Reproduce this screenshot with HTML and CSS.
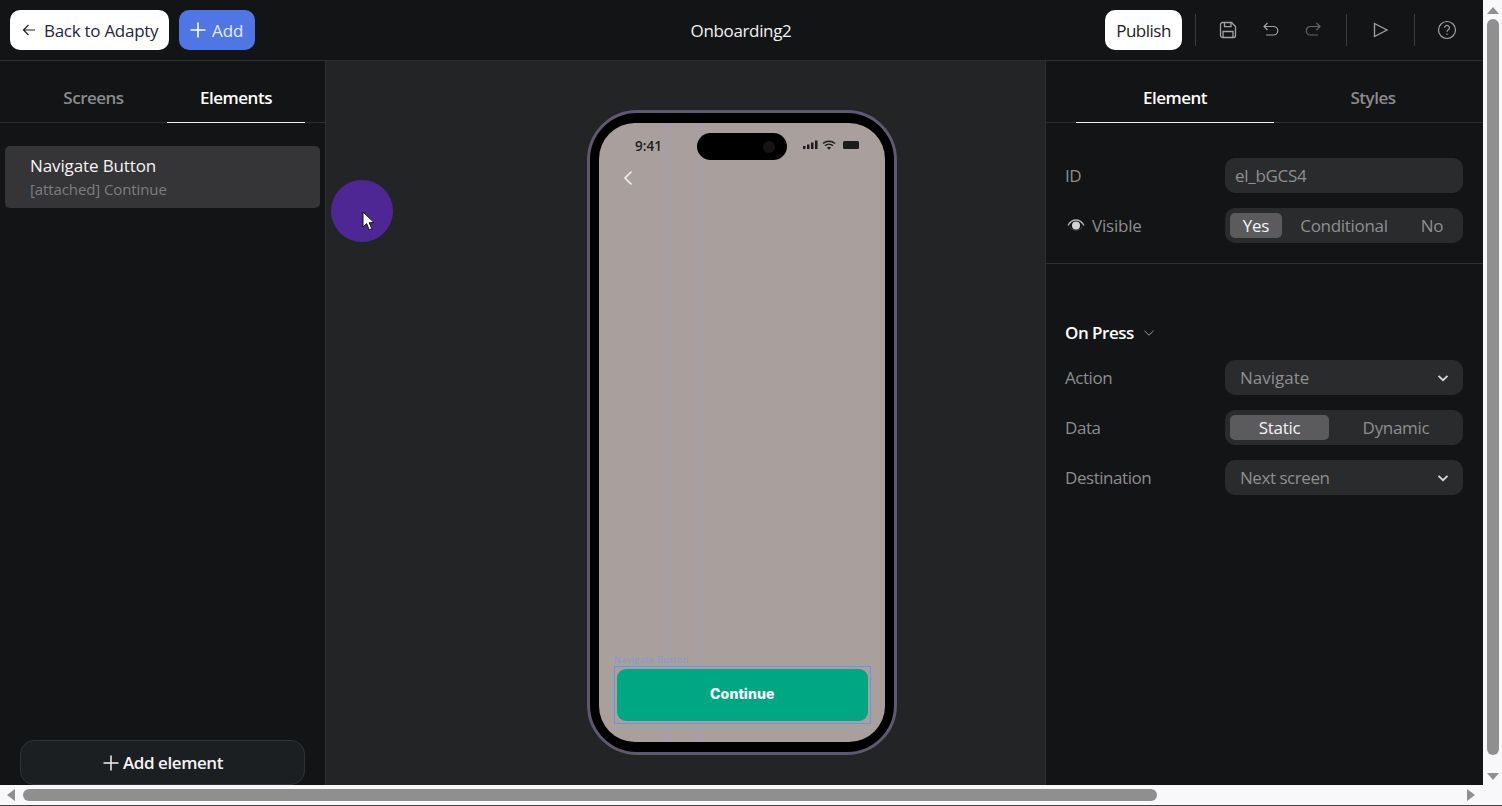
FILE: index.html
```html
<!DOCTYPE html>
<html lang="en">
<head>
<meta charset="utf-8">
<title>Onboarding2</title>
<link rel="stylesheet" href="styles.css">
</head>
<body>
<div class="window">
  <div class="app">
    <header class="topbar">
      <div class="top-left">
        <button class="btn btn-white btn-back">
          <svg class="ico" width="16" height="16" viewBox="0 0 16 16" fill="none" stroke="#222" stroke-width="1.2"><path d="M14 8H2.500M7.500 3 2.500 8l5 5"/></svg>
          <span>Back to Adapty</span>
        </button>
        <button class="btn btn-blue">
          <svg width="18" height="18" viewBox="0 0 18 18" fill="none" stroke="#fff" stroke-width="1.6"><path d="M9 1.500V16.500M1.500 9H16.500"/></svg>
          <span>Add</span>
        </button>
      </div>
      <div class="title">Onboarding2</div>
      <div class="top-right">
        <button class="btn btn-white btn-publish">Publish</button>
        <span class="vr vr-a"></span>
        <svg class="tool" width="20" height="20" viewBox="0 0 20 20" fill="none" stroke="#a3a3a3" stroke-width="1.3"><path d="M4.500 2.500h9l4 4v9a2 2 0 0 1-2 2h-11a2 2 0 0 1-2-2v-11a2 2 0 0 1 2-2Z"/><path d="M6.500 2.500v4.200h6.500V2.500M5 17.500v-6h10v6"/></svg>
        <svg class="tool tool-undo" width="20" height="20" viewBox="0 0 20 20" fill="none" stroke="#a3a3a3" stroke-width="1.2"><path d="M6.500 3 3 6.500 6.500 10M3 6.500h9.500a3.800 3.800 0 0 1 0 8.500H5"/></svg>
        <svg class="tool tool-redo" width="20" height="20" viewBox="0 0 20 20" fill="none" stroke="#666" stroke-width="1.2"><path d="M13.500 3 17 6.500 13.500 10M17 6.500H7.500a3.800 3.800 0 0 0 0 8.500H15"/></svg>
        <span class="vr vr-b"></span>
        <svg class="tool tool-play" width="20" height="20" viewBox="0 0 20 20" fill="none" stroke="#a3a3a3" stroke-width="1.3"><path d="M4.500 3.500 17 10 4.500 16.500Z"/></svg>
        <span class="vr vr-c"></span>
        <svg class="tool tool-help" width="20" height="20" viewBox="0 0 20 20" fill="none" stroke="#a3a3a3" stroke-width="1.2"><circle cx="10" cy="10" r="8.500"/><path d="M7.600 7.800a2.400 2.400 0 1 1 3.700 2c-.9.600-1.300 1-1.300 2"/><path d="M10 13.500v1.200"/></svg>
      </div>
    </header>
    <main class="body">
      <aside class="left">
        <nav class="tabs tabs-left">
          <div class="tab">Screens</div>
          <div class="tab active">Elements</div>
        </nav>
        <div class="list">
          <div class="list-item">
            <div class="item-name">Navigate Button</div>
            <div class="item-sub">[attached] Continue</div>
          </div>
        </div>
        <button class="add-element">
          <svg width="18" height="18" viewBox="0 0 18 18" fill="none" stroke="#f2f2f2" stroke-width="1.500"><path d="M9 1.500V16.500M1.500 9H16.500"/></svg>
          <span>Add element</span>
        </button>
      </aside>
      <section class="canvas">
        <div class="phone">
          <div class="screen">
            <div class="status">
              <span class="time">9:41</span>
              <span class="island"><i class="camera"></i></span>
              <svg class="status-icons" width="58" height="12" viewBox="0 0 58 12" fill="#1c1c1c">
                <rect x="1" y="7" width="2.500" height="3"/><rect x="5" y="5.500" width="2.500" height="4.500"/><rect x="9" y="3.500" width="2.500" height="6.500"/><rect x="13" y="1.500" width="2.500" height="8.500"/>
                <path d="M21 4.500a9 9 0 0 1 12 0M23 6.800a6 6 0 0 1 8 0" fill="none" stroke="#1c1c1c" stroke-width="1.500"/><path d="M25 8.500a3.200 3.200 0 0 1 4 0L27 10.800Z"/>
                <rect x="41" y="2" width="16" height="8" rx="1.500"/>
              </svg>
            </div>
            <svg class="back-chevron" width="12" height="18" viewBox="0 0 12 18" fill="none" stroke="#f4f2f2" stroke-width="1.500"><path d="M9.500 2.500 3 9l6.500 6.500"/></svg>
            <div class="screen-spacer"></div>
            <div class="selection-label">Navigate Button</div>
            <div class="selection">
              <button class="continue">Continue</button>
            </div>
          </div>
        </div>
        <div class="click-dot">
          <svg class="cursor" width="14" height="21" viewBox="0 0 14 21"><path d="M1 1v15l3.600-3.400 2.600 6.200 2.600-1.100-2.600-6 4.800-.2Z" fill="#fff" stroke="#111" stroke-width="1"/></svg>
        </div>
      </section>
      <aside class="right">
        <nav class="tabs tabs-right">
          <div class="tab active">Element</div>
          <div class="tab">Styles</div>
        </nav>
        <div class="group group-first">
          <div class="row">
            <label class="label">ID</label>
            <div class="field muted">el_bGCS4</div>
          </div>
          <div class="row">
            <label class="label label-icon">
              <svg width="18" height="14" viewBox="0 0 18 14"><path d="M1 7.500C3 3.800 5.800 2 9 2s6 1.800 8 5.500" fill="none" stroke="#b5b5b5" stroke-width="1.300"/><path d="M3 9.500c1.700 1.800 3.700 2.600 6 2.600s4.300-.8 6-2.600" fill="none" stroke="#4a4a4a" stroke-width="1"/><circle cx="9" cy="7.500" r="4" fill="#d4d4d4"/></svg>
              <span>Visible</span>
            </label>
            <div class="segmented seg-visible">
              <span class="seg seg-on seg-yes">Yes</span>
              <span class="seg seg-cond">Conditional</span>
              <span class="seg seg-no">No</span>
            </div>
          </div>
        </div>
        <div class="group group-press">
          <div class="section-head">
            <span>On Press</span>
            <svg width="12" height="12" viewBox="0 0 12 12" fill="none" stroke="#999" stroke-width="1"><path d="M1.500 3.800 6 8.200l4.500-4.400"/></svg>
          </div>
          <div class="row">
            <label class="label">Action</label>
            <div class="field select"><span class="wide">Navigate</span><svg width="12" height="12" viewBox="0 0 12 12" fill="none" stroke="#d8d8d8" stroke-width="1.800"><path d="M1.500 3.800 6 8.200l4.500-4.400"/></svg></div>
          </div>
          <div class="row">
            <label class="label">Data</label>
            <div class="segmented seg-data">
              <span class="seg seg-on">Static</span>
              <span class="seg">Dynamic</span>
            </div>
          </div>
          <div class="row">
            <label class="label">Destination</label>
            <div class="field select"><span>Next screen</span><svg width="12" height="12" viewBox="0 0 12 12" fill="none" stroke="#d8d8d8" stroke-width="1.800"><path d="M1.500 3.800 6 8.200l4.500-4.400"/></svg></div>
          </div>
        </div>
      </aside>
    </main>
  </div>
  <div class="vscroll">
    <i class="arrow arrow-up"></i>
    <i class="vthumb"></i>
    <i class="arrow arrow-down"></i>
  </div>
  <div class="hscroll">
    <i class="arrow arrow-left"></i>
    <i class="hthumb"></i>
    <i class="arrow arrow-right"></i>
  </div>
</div>
</body>
</html>
```
FILE: styles.css
```css
* { box-sizing: border-box; }
html, body { margin: 0; padding: 0; height: 100%; overflow: hidden; background: #f8f8fb; }
body { font-family: "Open Sans", "Noto Sans", "Liberation Sans", sans-serif; color: #fff; }
button { font: inherit; border: 0; padding: 0; }

.window {
  display: grid;
  grid-template-columns: 1483px 19px;
  grid-template-rows: 785px 20px;
  height: 806px;
  border-bottom: 1px solid #444;
}
.app { display: flex; flex-direction: column; background: #131416; overflow: hidden; }

.topbar {
  height: 61px;
  flex: none;
  display: flex;
  align-items: center;
  border-bottom: 1px solid #2e2f31;
  padding-left: 10px;
}
.top-left { display: flex; gap: 10px; }
.btn {
  height: 40px;
  border-radius: 10px;
  display: flex;
  align-items: center;
  font-size: 17px;
  letter-spacing: -0.5px;
}
.btn-white { background: #fff; color: #1d2740; }
.btn-back { width: 159px; padding-left: 11px; gap: 7px; letter-spacing: -0.28px; }
.btn-blue { background: #4f76e4; width: 76px; padding-left: 10px; gap: 5px; color: #e6ecfb; letter-spacing: -0.1px; }
.btn-publish { width: 77px; justify-content: center; color: #222; }
.title {
  flex: none;
  width: 300px;
  margin-left: 336px;
  text-align: center;
  font-size: 17px;
  letter-spacing: -0.35px;
  color: #f2f2f2;
}
.top-right { display: flex; align-items: center; margin-left: 214px; }
.vr { width: 1px; height: 32px; background: #3a3b3d; }
.vr-a { margin-left: 13px; margin-right: 22px; }
.tool { flex: none; }
.tool-undo { margin-left: 23px; }
.tool-redo { margin-left: 22px; }
.vr-b { margin-left: 23px; margin-right: 23px; }
.vr-c { margin-left: 24px; margin-right: 22px; }

.body { flex: 1; min-height: 0; display: flex; }
.left {
  width: 326px;
  flex: none;
  display: flex;
  flex-direction: column;
  border-right: 1px solid #2e2f31;
}
.tabs {
  height: 62px;
  flex: none;
  display: grid;
  border-bottom: 1px solid #2e2f31;
  font-size: 17px;
  font-weight: 600;
  letter-spacing: -0.5px;
}
.tabs-left { grid-template-columns: 147px 138px; padding: 0 20px; }
.tabs-right { grid-template-columns: 198px 198px; padding: 0 10px 0 30px; }
.tab {
  display: flex;
  align-items: center;
  justify-content: center;
  color: #8b8b8c;
  padding-top: 11px;
  margin-bottom: -1px;
}
.tab.active { color: #fff; border-bottom: 1px solid #f2f2f2; }

.list { flex: 1; padding: 23px 5px 0; }
.list-item {
  height: 62px;
  border-radius: 5px;
  background: #353537;
  padding: 8px 25px;
}
.item-name { font-size: 17px; line-height: 24px; letter-spacing: -0.12px; color: #f4f4f4; }
.item-sub { font-size: 15px; line-height: 22px; letter-spacing: -0.1px; color: #7d7d7e; }
.add-element {
  flex: none;
  width: 285px;
  height: 45px;
  margin: 0 0 0 20px;
  border: 1px solid #303336;
  border-radius: 14px;
  background: #1c1f22;
  color: #f4f4f4;
  font-size: 17px;
  font-weight: 600;
  letter-spacing: -0.42px;
  display: flex;
  align-items: center;
  justify-content: center;
  gap: 3px;
}

.canvas {
  width: 719px;
  flex: none;
  background: #232426;
  padding: 49px 0 0 261px;
  position: relative;
}
.phone {
  width: 310px;
  height: 645px;
  border: 3px solid #5f5870;
  border-radius: 50px;
  background: #000;
  padding: 10px 9px;
}
.screen {
  height: 100%;
  border-radius: 36px;
  background:
    linear-gradient(90deg, transparent 64px, #a79fa3 64px, #a79fa3 74px, transparent 74px, transparent 97px, #a79fa3 97px, #a79fa3 105px, transparent 105px),
    #a9a09d;
  display: flex;
  flex-direction: column;
  padding: 0 14px 18px 15px;
}
.status { height: 37px; flex: none; display: flex; align-items: flex-start; margin: 0 -14px 0 -15px; }
.time { margin: 13px 0 0 36px; font-size: 13.500px; font-weight: 600; line-height: 20px; color: #1c1c1c; width: 62px; }
.island {
  width: 90px;
  height: 27px;
  margin-top: 10px;
  border-radius: 14px;
  background: #000;
  display: flex;
  align-items: center;
  justify-content: flex-end;
  padding-right: 12px;
}
.camera { width: 12px; height: 12px; border-radius: 50%; background: #161412; }
.status-icons { margin: 16px 0 0 15px; }
.back-chevron { flex: none; margin: 9px 0 0 8px; }
.screen-spacer { flex: 1; }
.selection-label { font-size: 9px; line-height: 11px; color: #7f9ad8; margin: 0 0 1px 0; white-space: nowrap; letter-spacing: 0.45px; }
.selection {
  flex: none;
  height: 58px;
  border: 1.500px solid #6b93e6;
  padding: 1.500px 2px 2px 1.500px;
}
.continue {
  width: 100%;
  height: 100%;
  border-radius: 9px;
  background: #00a783;
  color: #fff;
  font-family: "Inter", sans-serif;
  font-size: 14px;
  font-weight: 800;
  letter-spacing: 0.1px;
  padding-bottom: 2px;
  display: block;
}
.click-dot {
  position: absolute;
  left: 5px;
  top: 119px;
  width: 62px;
  height: 62px;
  border-radius: 50%;
  background: #4f2795;
}
.cursor { position: absolute; left: 31px; top: 31px; }

.right { flex: 1; min-width: 0; border-left: 1px solid #2e2f31; }
.group { padding: 35px 20px 0 19px; display: flex; flex-direction: column; gap: 15px; }
.group-first { height: 141px; border-bottom: 1px solid #2e2f31; }
.group-press { padding-top: 58px; }
.section-head {
  display: flex;
  align-items: center;
  gap: 9px;
  font-size: 17px;
  font-weight: 600;
  letter-spacing: -0.5px;
  line-height: 22px;
  color: #fff;
  margin-bottom: 1px;
}
.row { display: flex; align-items: center; height: 35px; }
.label {
  width: 160px;
  flex: none;
  font-size: 17px;
  letter-spacing: -0.45px;
  color: #8d8d8e;
  display: flex;
  align-items: center;
  gap: 7px;
  padding-bottom: 1px;
}
.label-icon { padding-left: 2px; letter-spacing: -0.2px; }
.field {
  width: 238px;
  height: 35px;
  border-radius: 10px;
  background: #2a2b2d;
  padding: 0 10px;
  display: flex;
  align-items: center;
  font-size: 17px;
  letter-spacing: -0.3px;
  color: #8f8f90;
}
.select { justify-content: space-between; padding: 0 14px 0 15px; letter-spacing: -0.45px; }
.wide { letter-spacing: 0; }
.segmented {
  width: 238px;
  height: 35px;
  border-radius: 10px;
  background: #2a2b2d;
  padding: 5px;
  display: flex;
  align-items: center;
  font-size: 17px;
  letter-spacing: -0.3px;
  color: #8f8f90;
}
.seg { height: 25px; border-radius: 5px; display: flex; align-items: center; justify-content: center; }
.seg-on { background: #5b5b5e; color: #f4f4f4; }
.seg-yes { width: 52px; }
.seg-cond { width: 124px; }
.seg-no { width: 52px; }
.seg-data .seg { width: 99px; }
.seg-data .seg + .seg { width: 129px; padding-left: 5px; }

.vscroll {
  background: #f8f8fb;
  display: flex;
  flex-direction: column;
  align-items: center;
  padding: 7px 0 5px;
  grid-row: 1;
  grid-column: 2;
}
.vthumb { display: block; width: 12px; flex: 1; margin: 5px 0 18px; border-radius: 6px; background: #8f8f8f; }
.hscroll {
  grid-row: 2;
  grid-column: 1 / 3;
  background: #f8f8fb;
  display: flex;
  align-items: center;
  padding: 0 24px 1px 7px;
}
.hthumb { display: block; width: 1134px; height: 12px; border-radius: 6px; background: #8f8f8f; margin: 0 310px 0 8px; }
.arrow { display: block; width: 0; height: 0; flex: none; border-style: solid; border-color: transparent; }
.arrow-up { border-width: 0 6px 7px; border-bottom-color: #8f8f8f; }
.arrow-down { border-width: 7px 6px 0; border-top-color: #8f8f8f; }
.arrow-left { border-width: 6px 8px 6px 0; border-right-color: #8f8f8f; }
.arrow-right { border-width: 6px 0 6px 8px; border-left-color: #8f8f8f; }
```
